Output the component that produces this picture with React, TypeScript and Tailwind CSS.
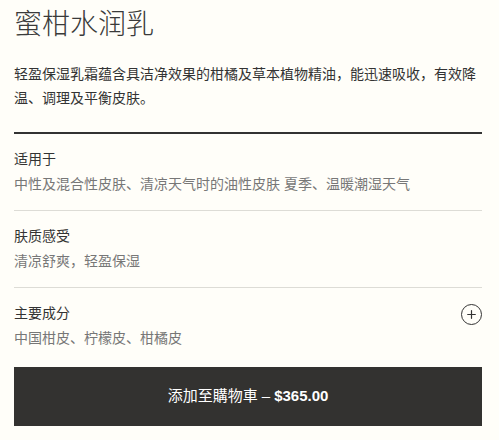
import { Plus } from "lucide-react";

const font = { fontFamily: '"Liberation Sans", "Noto Sans CJK SC", sans-serif' };

const sections = [
  { label: "适用于", value: "中性及混合性皮肤、清凉天气时的油性皮肤 夏季、温暖潮湿天气" },
  { label: "肤质感受", value: "清凉舒爽，轻盈保湿" },
  { label: "主要成分", value: "中国柑皮、柠檬皮、柑橘皮", toggle: true },
];

export default function App() {
  return (
    <div className="min-h-[440px] w-[499px] bg-[#fffef9] font-['Liberation_Sans','Noto_Sans_CJK_SC',sans-serif]" style={font}>
      <div className="w-[468px] pl-[14px] box-content">
        <h1 className="pt-[8px] text-[28px] font-light leading-[34px] text-[#3a3a3a]">蜜柑水润乳</h1>
        <p className="mt-[20px] text-[14px] leading-[24px] text-[#333]">
          轻盈保湿乳霜蕴含具洁净效果的柑橘及草本植物精油，能迅速吸收，有效降温、调理及平衡皮肤。
        </p>
        <div className="mt-[22px] border-t-2 border-[#333]">
          {sections.map((s, i) => (
            <div
              key={s.label}
              className={`flex items-start justify-between pt-[13px] pb-[13px] ${
                i < sections.length - 1 ? "border-b border-[#dddcd6]" : ""
              }`}
            >
              <div>
                <div className="text-[14px] leading-[25px] text-[#333]">{s.label}</div>
                <div className="text-[14px] leading-[25px] text-[#777]">{s.value}</div>
              </div>
              {s.toggle ? (
                <span className="mt-[3px] flex h-[21px] w-[21px] items-center justify-center rounded-full border-[1.5px] border-[#333]">
                  <Plus size={13} strokeWidth={2.2} color="#333" />
                </span>
              ) : null}
            </div>
          ))}
        </div>
        <button className="mt-[3px] flex h-[59px] w-[468px] items-center justify-center bg-[#333230] text-[15px] text-white">
          添加至購物車 – <span className="ml-[4px] font-bold">$365.00</span>
        </button>
      </div>
    </div>
  );
}
